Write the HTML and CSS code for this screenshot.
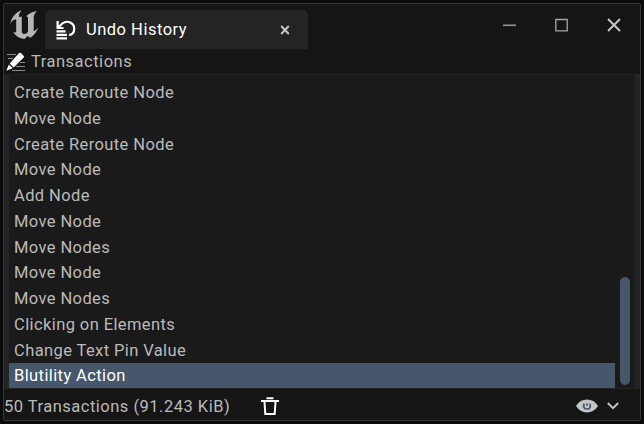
FILE: index.html
```
<!DOCTYPE html>
<html lang="en">
<head>
<meta charset="utf-8">
<title>Undo History</title>
<link rel="stylesheet" href="styles.css">
</head>
<body>
<main class="window">
  <header class="titlebar">
    <svg class="logo" width="30" height="32" viewBox="0 0 30 32"><path fill="#b5b5b5" d="M12.500 1.200C7.500 2.800 2.700 7.800 1.200 14.700C3.400 11.500 5.600 10 7.200 10.800V22C7.200 23.500 6.100 23.900 4.200 23.100C6.700 27.200 11 29.800 15.500 29.900L18.600 27.100L21.200 28.700C24.800 26.700 27.700 23.200 29.200 18.500C27.200 21 25.600 22.100 24.700 22V9.200C24.700 6.500 25.500 4.400 27.900 2.100C23.600 2.900 20.300 4.500 17.300 7.100L19 8.500V22.500C18.200 24.200 16.800 25 15.100 25C13.700 25 13.200 24.300 12.800 23.100V7.500C11.500 8 10.800 8.100 9.900 7.700C9.800 5.500 10.700 3.400 12.500 1.200Z"/></svg>
    <div class="tab">
      <svg class="undo" width="20" height="20" viewBox="0 0 20 20" fill="none" stroke="#fff"><path stroke-width="2.200" d="M1.600 1V8H7.500M2.500 7.300L6.300 3.500C11.500-.5 18.300 3.200 18.200 8.800C18.200 12 16 14.600 13.200 15.200M.5 11.300H9.500M.5 14.800H11M.5 18.300H11"/></svg>
      <span class="tab-title">Undo History</span>
      <svg class="tab-close" width="10" height="10" viewBox="0 0 10 10"><path stroke="#c8c8c8" stroke-width="1.900" d="M1.200 1L8.800 9M8.800 1L1.200 9"/></svg>
    </div>
    <div class="controls">
      <svg width="13" height="14" viewBox="0 0 13 14"><path stroke="#929292" stroke-width="1.600" d="M0 7.300H13"/></svg>
      <svg width="13" height="14" viewBox="0 0 13 14"><path fill="none" stroke="#a6a6a6" stroke-width="1.300" d="M.8 1.500H12.200V12.900H.8Z"/></svg>
      <svg width="14" height="14" viewBox="0 0 14 14"><path stroke="#c8c8c8" stroke-width="1.900" d="M1 1L13 13M13 1L1 13"/></svg>
    </div>
  </header>
  <div class="heading">
    <svg width="20" height="20" viewBox="0 0 20 20"><path stroke="#8c8c8c" stroke-width="1" d="M1 2.500H10M2 6.500H7M14 10.500H19M10 14.500H19M6 18.500H19"/><path fill="#fff" d="M13.100 1Q14 .3 14.900 1L17.800 3.900Q18.500 4.700 17.700 5.600L7.700 15.500L3.700 11.400ZM2.900 12.400L6.700 16.200L.2 18.800Z"/></svg>
    <span>Transactions</span>
  </div>
  <section class="panel">
    <ul class="list">
      <li>Create Reroute Node</li>
      <li>Move Node</li>
      <li>Create Reroute Node</li>
      <li>Move Node</li>
      <li>Add Node</li>
      <li>Move Node</li>
      <li>Move Nodes</li>
      <li>Move Node</li>
      <li>Move Nodes</li>
      <li>Clicking on Elements</li>
      <li>Change Text Pin Value</li>
      <li class="selected">Blutility Action</li>
    </ul>
    <div class="scrollbar"><div class="thumb"></div></div>
  </section>
  <footer class="status">
    <span class="summary">50 Transactions (91.243 KiB)</span>
    <svg class="trash" width="18" height="20" viewBox="0 0 18 20"><path fill="none" stroke="#fff" stroke-width="2" d="M0 5H18M5.500 2.300H12.500M3.500 6L4.300 18H13.700L14.500 6"/></svg>
    <svg class="eye" width="22" height="14" viewBox="0 0 22 14"><path fill="#c4c4c4" d="M0 7Q4 .6 11 .6T22 7Q18 13.400 11 13.400T0 7Z"/><path fill="none" stroke="#46576c" stroke-width="1.700" d="M8.300 4.600C6.800 7.300 8 10 11 10S15.200 7.300 13.700 4.600"/><path stroke="#46576c" stroke-width="1.500" d="M11 4.300V7"/></svg>
    <svg class="chevron" width="12" height="8" viewBox="0 0 12 8"><path fill="none" stroke="#c8c8c8" stroke-width="1.800" d="M.8 1L6 6.200L11.200 1"/></svg>
  </footer>
</main>
</body>
</html>
```
FILE: styles.css
```
* { box-sizing: border-box; }
body {
  margin: 0;
  height: 424px;
  padding: 3px;
  overflow: hidden;
  background: #0b0b0b;
  color: #bababa;
  font: 16.5px/20px Roboto, sans-serif;
  letter-spacing: .5px;
}
svg { display: block; flex: none; }
span { white-space: nowrap; }
.window {
  width: 638px;
  height: 418px;
  border: 1px solid #363636;
  border-radius: 2px;
  background: #151515;
  display: flex;
  flex-direction: column;
}
.titlebar { height: 45px; display: flex; flex: none; }
.logo { margin: 5px 0 0 5px; }
.tab {
  width: 263px;
  height: 39px;
  margin: 6px 0 0 6px;
  padding: 0 18px 0 11px;
  border-radius: 5px 5px 0 0;
  background: #242424;
  color: #fff;
  display: flex;
  align-items: center;
}
.tab-title { margin-left: 10px; }
.tab-close { margin-left: auto; }
.controls { display: flex; gap: 39px; margin: 14px 19px 0 auto; }
.heading { height: 25px; flex: none; display: flex; align-items: center; gap: 5px; padding-left: 2px; }
.panel {
  height: 315px;
  flex: none;
  border: solid #242424;
  border-width: 1px 5px 1px 5px;
  background: #1a1a1a;
  display: flex;
  justify-content: space-between;
}
.list { width: 606px; margin: 0; padding: 4px 0 0; list-style: none; letter-spacing: .4px; }
.list li { height: 25.750px; line-height: 27px; padding-left: 5px; }
.list .selected { height: 25px; margin-top: .75px; line-height: 25.500px; background: #46576c; color: #fff; }
.scrollbar { width: 10px; margin-right: 5px; padding-top: 202px; }
.thumb { height: 108px; border-radius: 5px; background: #46576c; }
.status { flex: 1; display: flex; align-items: center; padding-top: 3px; }
.summary { letter-spacing: .49px; padding-top: 2px; }
.trash { margin-left: 31px; }
.eye { margin-left: auto; }
.chevron { margin: 0 21px 0 9px; }
```
